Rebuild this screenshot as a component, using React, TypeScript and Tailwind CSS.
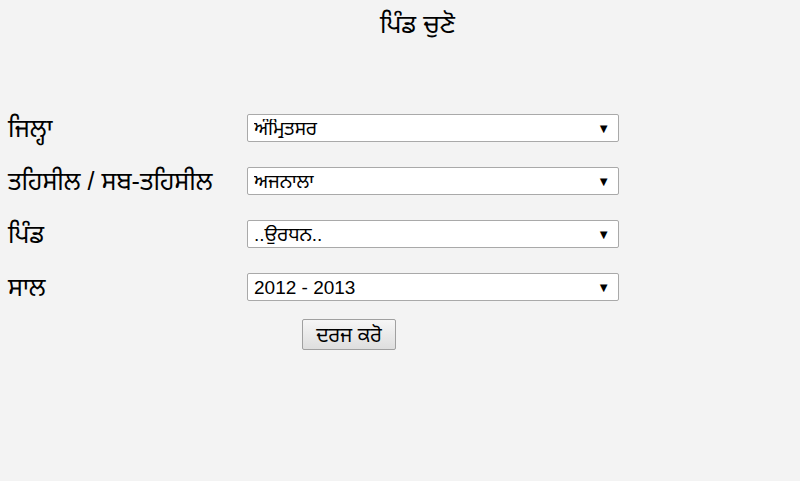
import React from "react";

const rows: { label: string; value: string }[] = [
  { label: "ਜਿਲ੍ਹਾ", value: "ਅੰਮ੍ਰਿਤਸਰ" },
  { label: "ਤਹਿਸੀਲ / ਸਬ-ਤਹਿਸੀਲ", value: "ਅਜਨਾਲਾ" },
  { label: "ਪਿੰਡ", value: "..ਉਰਧਨ.." },
  { label: "ਸਾਲ", value: "2012 - 2013" },
];

const SelectBox = ({ value }: { value: string }) => (
  <div className="relative w-[372px]">
    <select
      defaultValue={value}
      className="h-[28px] w-full appearance-none rounded-[2px] border border-[#a9a9a9] bg-white pl-[6px] text-[19px] leading-none text-black outline-none"
    >
      <option value={value}>{value}</option>
    </select>
    {/* dropdown arrow */}
    <span className="pointer-events-none absolute right-[9px] top-[5px] text-[13px] text-black">
      ▼
    </span>
  </div>
);

export default function App() {
  return (
    <div
      className="h-[481px] w-[800px] bg-[#f3f3f3] px-[8px] pt-[2px] text-black"
      style={{ fontFamily: '"Liberation Sans", "Noto Sans Gurmukhi", "Noto Sans", sans-serif' }}
    >
      <h2 className="pt-[7px] pl-[372px] text-[25px] leading-[30px]">ਪਿੰਡ ਚੁਣੋ</h2>

      <div className="mt-[75px] flex flex-col gap-[25px]">
        {rows.map((r) => (
          <div key={r.label} className="flex items-center">
            <div className="w-[239px] text-[25px] leading-[28px]">{r.label}</div>
            <SelectBox value={r.value} />
          </div>
        ))}
      </div>

      <div className="mt-[18px] pl-[294px]">
        <button className="h-[31px] w-[94px] rounded-[2px] border border-[#a0a0a0] bg-gradient-to-b from-[#f6f6f6] to-[#dedede] text-[20px] leading-none">
          ਦਰਜ ਕਰੋ
        </button>
      </div>
    </div>
  );
}
